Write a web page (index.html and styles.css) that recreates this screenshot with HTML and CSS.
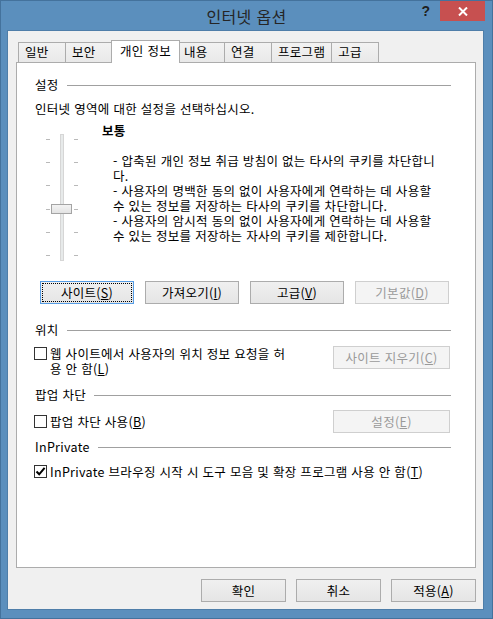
FILE: index.html
```html
<!DOCTYPE html>
<html lang="ko">
<head>
  <meta charset="UTF-8">
  <title>인터넷 옵션</title>
  <link rel="stylesheet" href="styles.css">
</head>
<body>

  <div class="window">
    <div class="titlebar">
      <h1 class="title">인터넷 옵션</h1>
      <div class="controls">
        <span class="help">?</span>
        <span class="close">
          <svg width="10" height="9" viewBox="0 0 10 9"><path d="M1 0.5 L9 8.5 M9 0.5 L1 8.5" stroke="#fff" stroke-width="2"/></svg>
        </span>
      </div>
    </div>

    <div class="client">
      <div class="tabs">
        <span class="tab">일반</span>
        <span class="tab">보안</span>
        <span class="tab tab-active">개인 정보</span>
        <span class="tab">내용</span>
        <span class="tab">연결</span>
        <span class="tab">프로그램</span>
        <span class="tab">고급</span>
      </div>

      <div class="panel">
        <div class="group-head"><span>설정</span></div>
        <p class="intro">인터넷 영역에 대한 설정을 선택하십시오.</p>

        <div class="level">
          <div class="slider">
            <div class="track"></div>
            <div class="ticks">
              <span class="tick"></span>
              <span class="tick"></span>
              <span class="tick"></span>
              <span class="tick"></span>
              <span class="tick"></span>
              <span class="tick"></span>
            </div>
            <div class="thumb"></div>
          </div>
          <div class="level-text">
            <div class="level-name">보통</div>
            <div class="level-desc">
              <p>- 압축된 개인 정보 취급 방침이 없는 타사의 쿠키를 차단합니<br>다.</p>
              <p>- 사용자의 명백한 동의 없이 사용자에게 연락하는 데 사용할<br>수 있는 정보를 저장하는 타사의 쿠키를 차단합니다.</p>
              <p>- 사용자의 암시적 동의 없이 사용자에게 연락하는 데 사용할<br>수 있는 정보를 저장하는 자사의 쿠키를 제한합니다.</p>
            </div>
          </div>
        </div>

        <div class="button-row">
          <button class="btn btn-focus">사이트(<u>S</u>)</button>
          <button class="btn">가져오기(<u>I</u>)</button>
          <button class="btn">고급(<u>V</u>)</button>
          <button class="btn" disabled>기본값(<u>D</u>)</button>
        </div>

        <div class="group-head head-location"><span>위치</span></div>
        <div class="option-row row-location">
          <label class="check">
            <span class="box"></span>
            <span>웹 사이트에서 사용자의 위치 정보 요청을 허<br>용 안 함(<u>L</u>)</span>
          </label>
          <button class="btn btn-wide" disabled>사이트 지우기(<u>C</u>)</button>
        </div>

        <div class="group-head group-head-wide head-popup"><span>팝업 차단</span></div>
        <div class="option-row row-popup">
          <label class="check">
            <span class="box"></span>
            <span>팝업 차단 사용(<u>B</u>)</span>
          </label>
          <button class="btn btn-wide" disabled>설정(<u>E</u>)</button>
        </div>

        <div class="group-head group-head-wide head-inprivate"><span>InPrivate</span></div>
        <div class="option-row row-inprivate">
          <label class="check">
            <span class="box">
              <svg width="11" height="11" viewBox="0 0 11 11"><path d="M1.5 5.5 L4.2 8.3 L9.6 1.8" fill="none" stroke="#000" stroke-width="2"/></svg>
            </span>
            <span>InPrivate 브라우징 시작 시 도구 모음 및 확장 프로그램 사용 안 함(<u>T</u>)</span>
          </label>
        </div>
      </div>

      <div class="footer">
        <button class="btn btn-footer">확인</button>
        <button class="btn btn-footer">취소</button>
        <button class="btn btn-footer">적용(<u>A</u>)</button>
      </div>
    </div>
  </div>

</body>
</html>
```

FILE: styles.css
```css
* {
  box-sizing: border-box;
}

body {
  margin: 0;
  font-family: "Noto Sans CJK KR", sans-serif;
  font-size: 12.5px;
  letter-spacing: 0.3px;
  color: #000;
  background: #5b8fbd;
}

p {
  margin: 0;
}

.window {
  width: 493px;
  height: 619px;
  background: #5b8fbd;
  border: 1px solid #44729c;
  display: flex;
  flex-direction: column;
}

/* title bar */
.titlebar {
  height: 29px;
  display: grid;
  grid-template-columns: 80px 1fr 80px;
}

.title {
  grid-column: 2;
  margin: 0;
  font-size: 16px;
  font-weight: normal;
  line-height: 30px;
  text-align: center;
  color: #252525;
}

.controls {
  grid-column: 3;
  justify-self: end;
  align-self: start;
  display: flex;
  height: 20px;
  margin-right: 7px;
}

.help {
  width: 28px;
  text-align: center;
  font: bold 14px "Liberation Sans", sans-serif;
  line-height: 21px;
  color: #1f1f1f;
}

.close {
  width: 45px;
  height: 20px;
  background: #c75050;
  display: flex;
  align-items: center;
  justify-content: center;
}

/* client area */
.client {
  flex: 1;
  margin: 0 8px 8px 6px;
  padding: 9px 7px 7px 8px;
  background: #f0f0f0;
  border: 1px solid #4e7ea9;
  display: flex;
  flex-direction: column;
}

.tabs {
  display: flex;
  align-items: flex-end;
  height: 22px;
  padding-left: 2px;
}

.tab {
  height: 20px;
  min-width: 48px;
  padding: 0 6px;
  margin-left: -1px;
  border: 1px solid #acacac;
  border-bottom: none;
  background: linear-gradient(#f2f2f2, #e9e9e9);
  line-height: 18px;
}

.tab:first-child {
  margin-left: 0;
}

.tab-active {
  position: relative;
  z-index: 1;
  height: 23px;
  margin: 0 -2px -1px -2px;
  padding: 0 8px 2px;
  background: #fff;
  line-height: 19px;
}

.panel {
  flex: 1;
  background: #fff;
  border: 1px solid #acacac;
  padding: 14px 24px 0 18px;
}

.group-head {
  display: flex;
  align-items: center;
  gap: 8px;
  line-height: 16px;
}

.group-head::after {
  content: "";
  flex: 1;
  height: 1px;
  background: #a0a0a0;
}

.group-head-wide span {
  min-width: 51px;
}

.head-location { margin-top: 18px; }
.head-popup { margin-top: 11px; }
.head-inprivate { margin-top: 6px; }

.intro {
  margin-top: 8px;
  line-height: 16px;
}

/* privacy level slider */
.level {
  display: flex;
  margin-top: 6px;
}

.slider {
  display: grid;
  width: 32px;
  height: 127px;
  margin: 11px 0 0 11px;
}

.slider > * {
  grid-area: 1 / 1;
}

.track {
  justify-self: start;
  width: 4px;
  height: 100%;
  margin-left: 14px;
  background: #e7eaea;
  border: 1px solid #d6d6d6;
}

.ticks {
  display: flex;
  flex-direction: column;
  justify-content: space-between;
  padding: 5px 0;
}

.tick {
  height: 1px;
  background: linear-gradient(to right, #b9b9b9 0 4px, transparent 4px 28px, #b9b9b9 28px);
}

.thumb {
  justify-self: start;
  align-self: start;
  width: 21px;
  height: 10px;
  margin: 70px 0 0 5px;
  background: linear-gradient(#f3f3f3, #e3e3e3);
  border: 1px solid #a4a4a4;
}

.level-text {
  margin-left: 24px;
  white-space: nowrap;
}

.level-name {
  font-weight: bold;
  line-height: 16px;
}

.level-desc {
  margin-top: 14px;
  padding-left: 11px;
  line-height: 15px;
}

/* buttons */
.btn {
  width: 94px;
  height: 23px;
  padding: 0;
  font-family: inherit;
  font-size: 12.5px;
  letter-spacing: 0.3px;
  color: #000;
  line-height: 21px;
  text-align: center;
  white-space: nowrap;
  border: 1px solid #acacac;
  background: linear-gradient(#f0f0f0, #e5e5e5);
}

.btn-focus {
  border-color: #569de5;
  outline: 1px dotted #000;
  outline-offset: -3px;
}

.btn:disabled {
  color: #9a9a9a;
  background: #f4f4f4;
  border-color: #cfcfcf;
}

.btn-wide {
  width: 117px;
  margin-right: 1px;
}

.btn-footer {
  width: 85px;
}

.button-row {
  display: flex;
  gap: 11px;
  margin-top: 20px;
  padding-left: 5px;
}

.option-row {
  display: flex;
  justify-content: space-between;
  align-items: flex-start;
}

.row-location { margin-top: 8px; }
.row-popup { margin-top: 7px; align-items: center; }
.row-inprivate { margin-top: 9px; }

.check {
  display: flex;
  align-items: flex-start;
  gap: 3px;
  margin-left: -1px;
  line-height: 15px;
  white-space: nowrap;
}

.box {
  flex: none;
  width: 13px;
  height: 13px;
  margin-top: 1px;
  border: 1px solid #333;
  background: #fff;
  display: flex;
}

.footer {
  display: flex;
  justify-content: flex-end;
  gap: 10px;
  margin-top: 11px;
}
```
